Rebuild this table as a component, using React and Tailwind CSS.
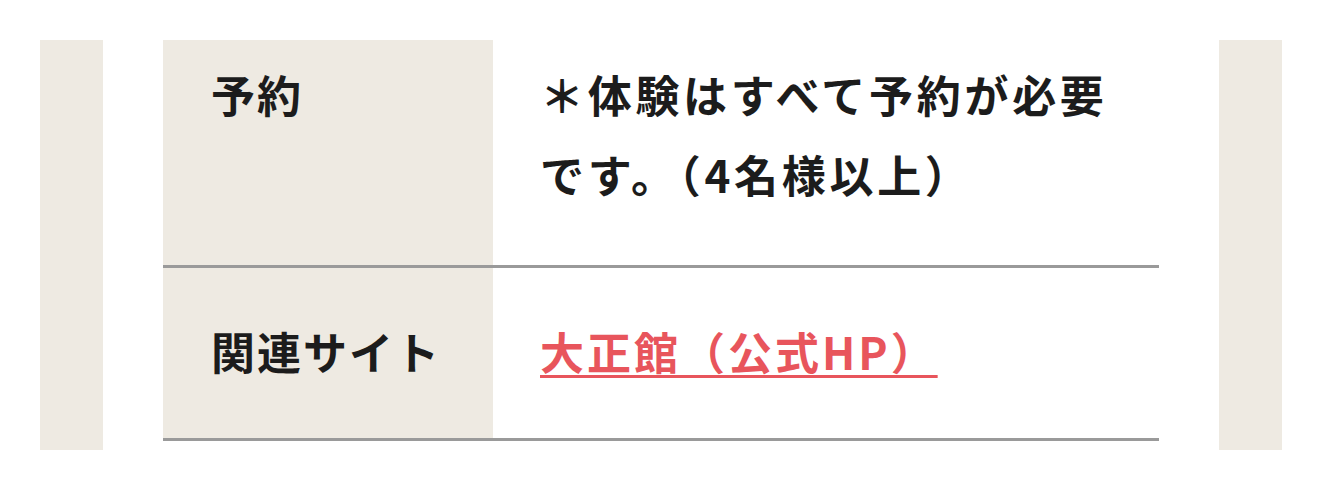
export default function App() {
  const font = { fontFamily: '"Noto Sans CJK JP", "Noto Sans", sans-serif' };
  return (
    <div
      className="flex h-[490px] w-[1322px] gap-[60px] bg-white px-[40px] pt-[40px] text-[#1c1c1c]"
      style={font}
    >
      <div className="h-[410px] w-[63px] shrink-0 bg-[#eeeae2]" />
      <div className="w-[996px] shrink-0">
        <div className="flex border-b-[3px] border-[#9a9a9a]">
          <div className="w-[330px] shrink-0 bg-[#eeeae2] pb-[51px] pl-[48px] pt-[14px] text-[44px] font-bold leading-[80px] tracking-[2px]">
            予約
          </div>
          <div className="flex-1 pb-[51px] pl-[47px] pr-[40px] pt-[14px] text-[44px] font-bold leading-[80px] tracking-[3.7px]">
            ＊体験はすべて予約が必要です。（4名様以上）
          </div>
        </div>
        <div className="flex border-b-[3px] border-[#9a9a9a]">
          <div className="w-[330px] shrink-0 bg-[#eeeae2] pb-[47px] pl-[48px] pt-[43px] text-[44px] font-bold leading-[80px] tracking-[2px]">
            関連サイト
          </div>
          <div className="flex-1 pb-[47px] pl-[47px] pr-[40px] pt-[43px] text-[44px] font-bold leading-[80px] tracking-[3px]">
            <a
              href="#"
              className="text-[#e8555c] underline decoration-[3px] underline-offset-[5px]"
            >
              大正館（公式HP）
            </a>
          </div>
        </div>
      </div>
      <div className="h-[410px] w-[63px] shrink-0 bg-[#eeeae2]" />
    </div>
  );
}
